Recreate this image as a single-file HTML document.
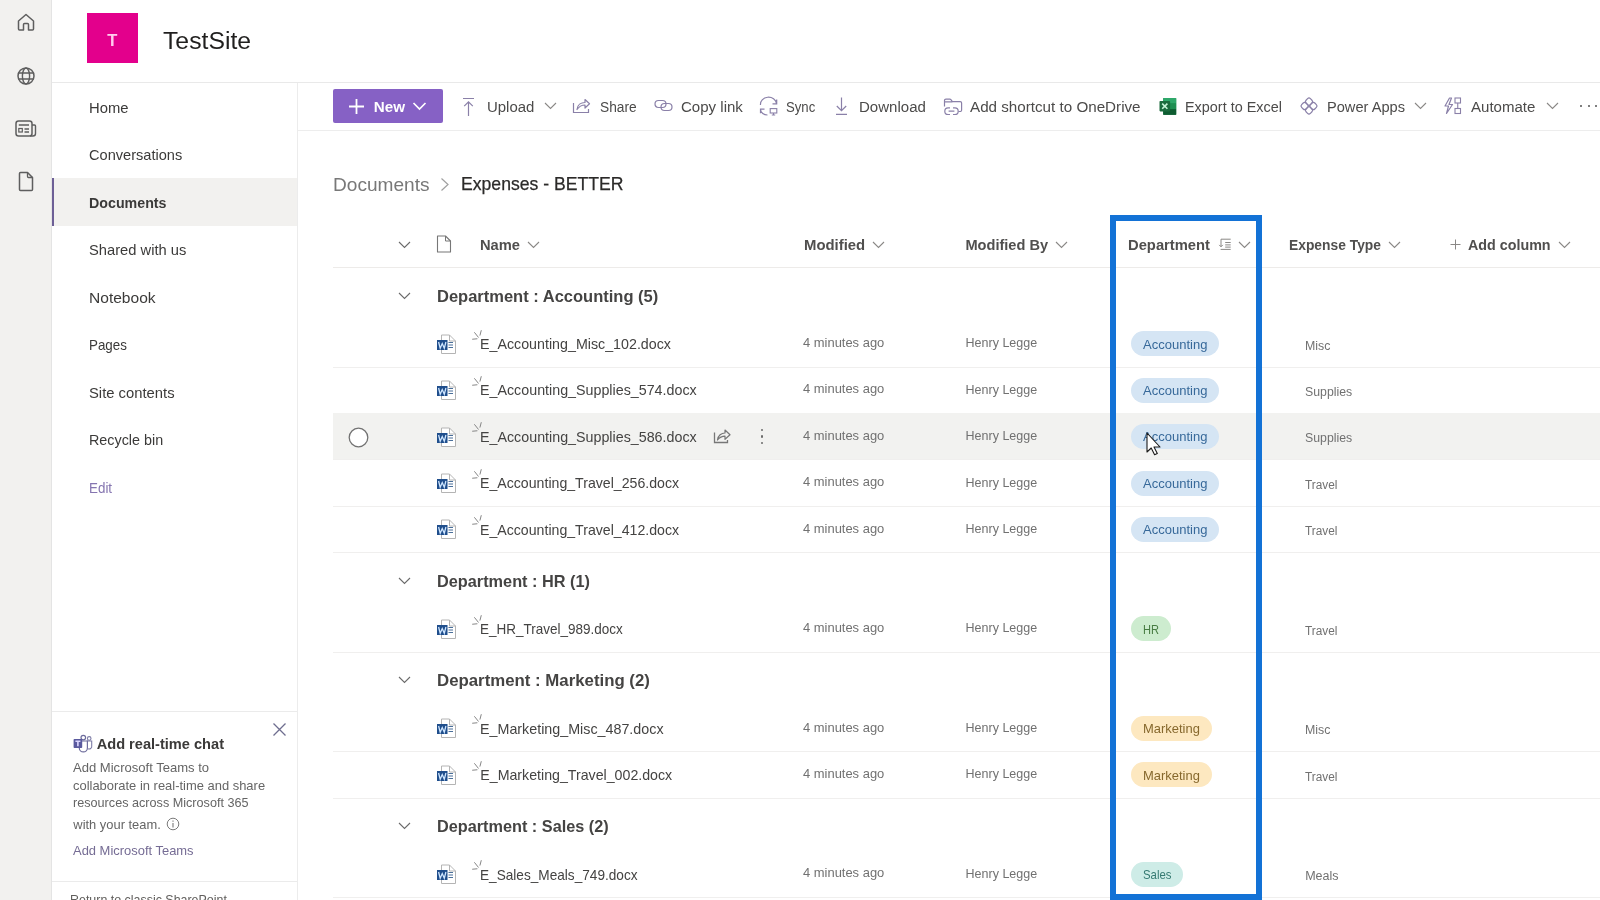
<!DOCTYPE html>
<html><head><meta charset="utf-8"><style>
html,body{margin:0;padding:0;width:1600px;height:900px;overflow:hidden;background:#fff;}
body{position:relative;font-family:"Liberation Sans", sans-serif;}
.t{position:absolute;white-space:nowrap;transform-origin:0 0;}
.r{position:absolute;}
</style></head><body><div id="w" style="position:absolute;left:0;top:0;width:1600px;height:900px;overflow:hidden;filter:blur(0.4px);">
<div class="r" style="left:0px;top:0px;width:51px;height:900px;background:#f2f1ef;"></div>
<div class="r" style="left:51px;top:0px;width:1px;height:900px;background:#e4e4e4;"></div>
<div class="r" style="left:52px;top:82px;width:1548px;height:1px;background:#e9e9e9;"></div>
<div class="r" style="left:297px;top:83px;width:1px;height:817px;background:#ececec;"></div>
<div class="r" style="left:298px;top:130px;width:1302px;height:1px;background:#ededed;"></div>
<svg class="r" style="left:16px;top:12px;" width="20" height="20" viewBox="0 0 20 20" fill="none"><path d="M2.5 9 L10 2.5 L17.5 9 V17 A1 1 0 0 1 16.5 18 H12.5 V12.5 A1 1 0 0 0 11.5 11.5 H8.5 A1 1 0 0 0 7.5 12.5 V18 H3.5 A1 1 0 0 1 2.5 17 Z" stroke="#5e5e5e" stroke-width="1.5" stroke-linejoin="round"/></svg>
<svg class="r" style="left:16px;top:66px;" width="20" height="20" viewBox="0 0 20 20" fill="none"><circle cx="10" cy="10" r="8" stroke="#5e5e5e" stroke-width="1.5"/><ellipse cx="10" cy="10" rx="3.6" ry="8" stroke="#5e5e5e" stroke-width="1.4"/><path d="M2.3 7H17.7M2.3 13H17.7" stroke="#5e5e5e" stroke-width="1.4"/></svg>
<svg class="r" style="left:15px;top:119px;" width="22" height="19" viewBox="0 0 22 19" fill="none"><rect x="1" y="2" width="16" height="15" rx="2.5" stroke="#5e5e5e" stroke-width="1.5"/><path d="M17 6H19.5A1 1 0 0 1 20.5 7V14.5A2.5 2.5 0 0 1 18 17H15" stroke="#5e5e5e" stroke-width="1.4"/><rect x="3.8" y="9.5" width="3.5" height="3.5" stroke="#5e5e5e" stroke-width="1.2"/><path d="M3.8 6H14M9.5 10H14M9.5 13H14" stroke="#5e5e5e" stroke-width="1.3"/></svg>
<svg class="r" style="left:17px;top:171px;" width="18" height="21" viewBox="0 0 18 21" fill="none"><path d="M2.5 2.5A1 1 0 0 1 3.5 1.5H10.5L15.5 6.5V18.5A1 1 0 0 1 14.5 19.5H3.5A1 1 0 0 1 2.5 18.5Z" stroke="#5e5e5e" stroke-width="1.5" stroke-linejoin="round"/><path d="M10.5 1.5V5.5A1 1 0 0 0 11.5 6.5H15.5" stroke="#5e5e5e" stroke-width="1.3"/></svg>
<div class="r" style="left:87px;top:13px;width:51px;height:50px;background:#e3008c;"></div>
<div class="t" style="left:107.20px;top:32.03px;font-size:16.5px;line-height:16.5px;color:#ffcdee;font-weight:700;">T</div>
<div class="t" style="left:163.00px;top:28.65px;font-size:24.4px;line-height:24.4px;color:#201f1e;transform:scaleX(1.0145);">TestSite</div>
<div class="r" style="left:52px;top:178px;width:245px;height:48px;background:#f2f1ef;"></div>
<div class="r" style="left:52px;top:178px;width:2px;height:48px;background:#6d5f96;"></div>
<div class="t" style="left:89.00px;top:100.97px;font-size:14.8px;line-height:14.8px;color:#3b3a39;">Home</div>
<div class="t" style="left:89.00px;top:148.47px;font-size:14.8px;line-height:14.8px;color:#3b3a39;transform:scaleX(0.9860);">Conversations</div>
<div class="t" style="left:89.00px;top:196.20px;font-size:14.3px;line-height:14.3px;color:#3b3a39;font-weight:700;transform:scaleX(0.9953);">Documents</div>
<div class="t" style="left:89.00px;top:243.27px;font-size:14.8px;line-height:14.8px;color:#3b3a39;transform:scaleX(0.9939);">Shared with us</div>
<div class="t" style="left:89.00px;top:290.67px;font-size:14.8px;line-height:14.8px;color:#3b3a39;transform:scaleX(1.0518);">Notebook</div>
<div class="t" style="left:89.00px;top:337.77px;font-size:14.8px;line-height:14.8px;color:#3b3a39;transform:scaleX(0.9033);">Pages</div>
<div class="t" style="left:89.00px;top:385.67px;font-size:14.8px;line-height:14.8px;color:#3b3a39;">Site contents</div>
<div class="t" style="left:89.00px;top:432.87px;font-size:14.8px;line-height:14.8px;color:#3b3a39;transform:scaleX(0.9697);">Recycle bin</div>
<div class="t" style="left:89.00px;top:480.57px;font-size:14.8px;line-height:14.8px;color:#8575b0;transform:scaleX(0.9048);">Edit</div>
<div class="r" style="left:52px;top:711px;width:245px;height:1px;background:#ebebeb;"></div>
<div class="r" style="left:52px;top:881px;width:245px;height:1px;background:#ebebeb;"></div>
<svg class="r" style="left:272px;top:722px;" width="15" height="15" viewBox="0 0 15 15" fill="none"><path d="M1.5 1.5L13.5 13.5M13.5 1.5L1.5 13.5" stroke="#6e6d8f" stroke-width="1.3"/></svg>
<svg class="r" style="left:71px;top:732px;" width="23" height="22" viewBox="0 0 23 22" fill="none"><circle cx="12.3" cy="5.6" r="2.3" stroke="#6d6c9c" stroke-width="1.2"/><circle cx="18.2" cy="6.4" r="1.8" stroke="#7d7ca6" stroke-width="1.1"/><path d="M15.8 9H20.7V13.8A2.6 2.6 0 0 1 16.8 16.6" stroke="#7d7ca6" stroke-width="1.1"/><path d="M8.3 9H16.4V15.9A4.05 4.05 0 0 1 8.3 15.9Z" fill="#fff" stroke="#6d6c9c" stroke-width="1.2"/><rect x="2.6" y="7" width="8.6" height="9" rx="0.8" fill="#5a5a9e"/><path d="M4.4 9.2H9.4M6.9 9.2V14.2" stroke="#dcd6ff" stroke-width="1.6"/></svg>
<div class="t" style="left:96.70px;top:736.94px;font-size:14.6px;line-height:14.6px;color:#3b3a39;font-weight:700;">Add real-time chat</div>
<div class="t" style="left:73.30px;top:762.28px;font-size:12.9px;line-height:12.9px;color:#656565;transform:scaleX(1.0123);">Add Microsoft Teams to</div>
<div class="t" style="left:73.30px;top:779.58px;font-size:12.9px;line-height:12.9px;color:#656565;transform:scaleX(1.0040);">collaborate in real-time and share</div>
<div class="t" style="left:73.30px;top:796.98px;font-size:12.9px;line-height:12.9px;color:#656565;transform:scaleX(0.9802);">resources across Microsoft 365</div>
<div class="t" style="left:73.36px;top:819.08px;font-size:12.9px;line-height:12.9px;color:#656565;">with your team.</div>
<svg class="r" style="left:166px;top:817px;" width="14" height="14" viewBox="0 0 14 14" fill="none"><circle cx="7" cy="7" r="5.8" stroke="#7a7a7a" stroke-width="1"/><path d="M7 6V10.5M7 3.6V4.8" stroke="#7a7a7a" stroke-width="1.1"/></svg>
<div class="t" style="left:73.30px;top:845.38px;font-size:12.9px;line-height:12.9px;color:#756c94;transform:scaleX(1.0039);">Add Microsoft Teams</div>
<div class="t" style="left:69.50px;top:894.08px;font-size:12.9px;line-height:12.9px;color:#605e5c;transform:scaleX(0.9644);">Return to classic SharePoint</div>
<div class="r" style="left:333px;top:89px;width:110px;height:34px;background:#8661c5;border-radius:2px;"></div>
<svg class="r" style="left:348px;top:98px;" width="17" height="17" viewBox="0 0 17 17" fill="none"><path d="M8.5 1V16M1 8.5H16" stroke="#fff" stroke-width="1.8"/></svg>
<div class="t" style="left:373.75px;top:99.13px;font-size:15.2px;line-height:15.2px;color:#ffffff;font-weight:700;">New</div>
<svg class="r" style="left:412px;top:101px;" width="15" height="10" viewBox="0 0 15 10" fill="none"><path d="M1.5 2L7.5 8L13.5 2" stroke="#fff" stroke-width="1.7"/></svg>
<svg class="r" style="left:462px;top:97px;" width="13" height="20" viewBox="0 0 13 20" fill="none"><path d="M1 1.5H12M6.5 4.5V19M2.2 9.2L6.5 4.9L10.8 9.2" stroke="#8a80a8" stroke-width="1.2"/></svg>
<div class="t" style="left:487.00px;top:100.09px;font-size:14.9px;line-height:14.9px;color:#4c4b4a;transform:scaleX(1.0035);">Upload</div>
<svg class="r" style="left:544px;top:102px;" width="13" height="8" viewBox="0 0 13 8" fill="none"><path d="M1 1L6.5 6.5L12 1" stroke="#8a8886" stroke-width="1.1"/></svg>
<svg class="r" style="left:572px;top:97px;" width="19" height="17" viewBox="0 0 19 17" fill="none"><path d="M1.5 6V15.5H16.5V12" stroke="#8a80a8" stroke-width="1.2"/><path d="M5 12.5C5.5 8 9 5.5 13 5.5V2.5L17.5 6.8L13 11V8C10 8 7 9.5 5 12.5Z" stroke="#8a80a8" stroke-width="1.2" stroke-linejoin="round"/></svg>
<div class="t" style="left:600.00px;top:100.09px;font-size:14.9px;line-height:14.9px;color:#4c4b4a;transform:scaleX(0.9225);">Share</div>
<svg class="r" style="left:654px;top:99px;" width="19" height="13" viewBox="0 0 19 13" fill="none"><rect x="1" y="1.5" width="11" height="7" rx="3.5" stroke="#8a80a8" stroke-width="1.2"/><rect x="7" y="4.5" width="11" height="7" rx="3.5" stroke="#8a80a8" stroke-width="1.2"/></svg>
<div class="t" style="left:680.70px;top:100.09px;font-size:14.9px;line-height:14.9px;color:#4c4b4a;transform:scaleX(1.0100);">Copy link</div>
<svg class="r" style="left:759px;top:96px;" width="20" height="21" viewBox="0 0 20 21" fill="none"><path d="M1.5 9A8 7 0 0 1 17.5 7.5M17.7 3.5V7.8H13.5" stroke="#8a80a8" stroke-width="1.2"/><path d="M1.5 13.5A7 6 0 0 0 8.5 19M1.5 17.2V13.2H5.5" stroke="#8a80a8" stroke-width="1.2"/><rect x="11.2" y="12.6" width="6.6" height="4.4" stroke="#8a80a8" stroke-width="1.1"/><path d="M14.5 17V19M12.8 19H16.2" stroke="#8a80a8" stroke-width="1.1"/></svg>
<div class="t" style="left:786.00px;top:100.09px;font-size:14.9px;line-height:14.9px;color:#4c4b4a;transform:scaleX(0.8838);">Sync</div>
<svg class="r" style="left:835px;top:96px;" width="13" height="20" viewBox="0 0 13 20" fill="none"><path d="M6.5 1.5V14.5M1.8 10L6.5 14.7L11.2 10M1 18.3H12" stroke="#8a80a8" stroke-width="1.2"/></svg>
<div class="t" style="left:859.40px;top:100.09px;font-size:14.9px;line-height:14.9px;color:#4c4b4a;transform:scaleX(1.0094);">Download</div>
<svg class="r" style="left:943px;top:97px;" width="20" height="20" viewBox="0 0 20 20" fill="none"><path d="M1.5 9.5V3.5A1.4 1.4 0 0 1 2.9 2.1H6.8A1.4 1.4 0 0 1 7.9 2.6L9.4 4.6H17.2A1.4 1.4 0 0 1 18.6 6V13.1A1.4 1.4 0 0 1 17.2 14.5H15.5M1.5 4.8H9.4" stroke="#8a80a8" stroke-width="1.2"/><path d="M7 10.9H5.1A3.3 3.3 0 0 0 5.1 17.5H7M10 10.9H11.9A3.3 3.3 0 0 1 11.9 17.5H10M5.6 14.2H11.4" stroke="#8a80a8" stroke-width="1.2"/></svg>
<div class="t" style="left:970.30px;top:100.09px;font-size:14.9px;line-height:14.9px;color:#4c4b4a;transform:scaleX(1.0202);">Add shortcut to OneDrive</div>
<svg class="r" style="left:1159px;top:97px;" width="18" height="18" viewBox="0 0 18 18" fill="none"><rect x="4.2" y="1" width="13" height="16.8" rx="0.8" fill="#107c41"/><rect x="4.2" y="1" width="13" height="5.6" fill="#2fa86a"/><rect x="10" y="6.6" width="7.2" height="5.6" fill="#1f8f52"/><rect x="4.2" y="12.2" width="13" height="5.6" fill="#0e5c31"/><rect x="0.5" y="4" width="10.6" height="10.4" rx="0.8" fill="#1b6a3d"/><path d="M3.2 6.6L8.4 11.8M8.4 6.6L3.2 11.8" stroke="#c6f2d6" stroke-width="1.6"/></svg>
<div class="t" style="left:1185.40px;top:100.09px;font-size:14.9px;line-height:14.9px;color:#4c4b4a;transform:scaleX(0.9680);">Export to Excel</div>
<svg class="r" style="left:1299px;top:96px;" width="20" height="20" viewBox="0 0 20 20" fill="none"><g transform="rotate(45 10 10)" stroke="#8a80a8" stroke-width="1.2"><rect x="3.8" y="3.8" width="6.2" height="6.2" rx="2"/><rect x="10" y="3.8" width="6.2" height="6.2" rx="2"/><rect x="3.8" y="10" width="6.2" height="6.2" rx="2"/><rect x="10" y="10" width="6.2" height="6.2" rx="2"/></g></svg>
<div class="t" style="left:1327.00px;top:100.09px;font-size:14.9px;line-height:14.9px;color:#4c4b4a;transform:scaleX(0.9812);">Power Apps</div>
<svg class="r" style="left:1414px;top:102px;" width="13" height="8" viewBox="0 0 13 8" fill="none"><path d="M1 1L6.5 6.5L12 1" stroke="#8a8886" stroke-width="1.1"/></svg>
<svg class="r" style="left:1443px;top:97px;" width="19" height="18" viewBox="0 0 19 18" fill="none"><path d="M6.5 1L2 9H5.5L3.5 16.5L9.5 7.5H6L8.5 1Z" stroke="#8a80a8" stroke-width="1.2" stroke-linejoin="round"/><rect x="12" y="1" width="5.5" height="5" stroke="#8a80a8" stroke-width="1.1"/><rect x="12" y="11.5" width="5.5" height="5" stroke="#8a80a8" stroke-width="1.1"/><path d="M14.75 6V11.5" stroke="#8a80a8" stroke-width="1.1"/></svg>
<div class="t" style="left:1470.60px;top:100.09px;font-size:14.9px;line-height:14.9px;color:#4c4b4a;transform:scaleX(1.0098);">Automate</div>
<svg class="r" style="left:1546px;top:102px;" width="13" height="8" viewBox="0 0 13 8" fill="none"><path d="M1 1L6.5 6.5L12 1" stroke="#8a8886" stroke-width="1.1"/></svg>
<div class="r" style="left:1580px;top:105px;width:2px;height:2px;background:#555;border-radius:1px;"></div>
<div class="r" style="left:1587.5px;top:105px;width:2px;height:2px;background:#555;border-radius:1px;"></div>
<div class="r" style="left:1595px;top:105px;width:2px;height:2px;background:#555;border-radius:1px;"></div>
<div class="t" style="left:332.80px;top:174.72px;font-size:19px;line-height:19px;color:#787878;transform:scaleX(1.0048);">Documents</div>
<svg class="r" style="left:440px;top:177px;" width="10" height="15" viewBox="0 0 10 15" fill="none"><path d="M1.5 1.5L8 7.5L1.5 13.5" stroke="#a0a0a0" stroke-width="1.2"/></svg>
<div class="t" style="left:461.00px;top:174.86px;font-size:18.6px;line-height:18.6px;color:#2b2a29;transform:scaleX(0.9471);-webkit-text-stroke:0.25px #2b2a29;">Expenses - BETTER</div>
<div class="r" style="left:333px;top:267px;width:1267px;height:1px;background:#edebe9;"></div>
<svg class="r" style="left:397.5px;top:241px;" width="13" height="8" viewBox="0 0 13 8" fill="none"><path d="M1 1L6.5 6.5L12 1" stroke="#6a6a6a" stroke-width="1.1"/></svg>
<svg class="r" style="left:436px;top:235px;" width="16" height="18" viewBox="0 0 16 18" fill="none"><path d="M1.5 1H9.5L14.5 6V17H1.5Z" stroke="#777" stroke-width="1.1" stroke-linejoin="round"/><path d="M9.5 1V6H14.5" stroke="#777" stroke-width="1"/></svg>
<div class="t" style="left:480.00px;top:237.64px;font-size:14.6px;line-height:14.6px;color:#504f4e;font-weight:700;transform:scaleX(1.0054);">Name</div>
<svg class="r" style="left:527px;top:241px;" width="13" height="8" viewBox="0 0 13 8" fill="none"><path d="M1 1L6.5 6.5L12 1" stroke="#8a8886" stroke-width="1.1"/></svg>
<div class="t" style="left:803.50px;top:237.64px;font-size:14.6px;line-height:14.6px;color:#504f4e;font-weight:700;transform:scaleX(1.0199);">Modified</div>
<svg class="r" style="left:872px;top:241px;" width="13" height="8" viewBox="0 0 13 8" fill="none"><path d="M1 1L6.5 6.5L12 1" stroke="#8a8886" stroke-width="1.1"/></svg>
<div class="t" style="left:965.40px;top:237.64px;font-size:14.6px;line-height:14.6px;color:#504f4e;font-weight:700;">Modified By</div>
<svg class="r" style="left:1055px;top:241px;" width="13" height="8" viewBox="0 0 13 8" fill="none"><path d="M1 1L6.5 6.5L12 1" stroke="#8a8886" stroke-width="1.1"/></svg>
<div class="t" style="left:1127.60px;top:237.64px;font-size:14.6px;line-height:14.6px;color:#504f4e;font-weight:700;transform:scaleX(1.0111);">Department</div>
<svg class="r" style="left:1218px;top:237px;" width="14" height="14" viewBox="0 0 14 14" fill="none"><path d="M3 2.2H12.7M3 2.2V9.6M1.2 7.9L3 9.8L4.8 7.9M7.2 5.5H12.7M7.2 7.9H12.7M7.2 10.1H12.7M2.6 12.4H12.7" stroke="#8a8886" stroke-width="1"/></svg>
<svg class="r" style="left:1238px;top:241px;" width="13" height="8" viewBox="0 0 13 8" fill="none"><path d="M1 1L6.5 6.5L12 1" stroke="#8a8886" stroke-width="1.1"/></svg>
<div class="t" style="left:1289.40px;top:237.64px;font-size:14.6px;line-height:14.6px;color:#504f4e;font-weight:700;transform:scaleX(0.9476);">Expense Type</div>
<svg class="r" style="left:1388px;top:241px;" width="13" height="8" viewBox="0 0 13 8" fill="none"><path d="M1 1L6.5 6.5L12 1" stroke="#8a8886" stroke-width="1.1"/></svg>
<svg class="r" style="left:1450px;top:239px;" width="11" height="11" viewBox="0 0 11 11" fill="none"><path d="M5.5 0.5V10.5M0.5 5.5H10.5" stroke="#8a8886" stroke-width="1"/></svg>
<div class="t" style="left:1467.60px;top:237.64px;font-size:14.6px;line-height:14.6px;color:#504f4e;font-weight:700;transform:scaleX(0.9797);">Add column</div>
<svg class="r" style="left:1558px;top:241px;" width="13" height="8" viewBox="0 0 13 8" fill="none"><path d="M1 1L6.5 6.5L12 1" stroke="#8a8886" stroke-width="1.1"/></svg>
<svg class="r" style="left:397.5px;top:291.55px;" width="13" height="8" viewBox="0 0 13 8" fill="none"><path d="M1 1L6.5 6.5L12 1" stroke="#6a6a6a" stroke-width="1.1"/></svg>
<div class="t" style="left:437.00px;top:287.68px;font-size:16.5px;line-height:16.5px;color:#454443;font-weight:700;">Department : Accounting (5)</div>
<svg class="r" style="left:436px;top:333.8px;" width="21" height="21" viewBox="0 0 21 21" fill="none"><path d="M5.5 1H13.5L19.5 7V19.5H5.5Z" fill="#fff" stroke="#b4b4b4" stroke-width="1"/><path d="M13.5 1V7H19.5" stroke="#b4b4b4" stroke-width="1"/><path d="M12.5 8.5H17M12.5 11H17M12.5 13.5H17" stroke="#4a6f9a" stroke-width="1"/><rect x="1" y="6" width="10.5" height="10" fill="#1f4e8c"/><path d="M2.6 8L4.2 14.3L6.25 9.6L8.3 14.3L9.9 8" stroke="#cfe6ff" stroke-width="1.3" fill="none"/></svg>
<svg class="r" style="left:471.5px;top:329.6px;" width="11" height="11" viewBox="0 0 11 11" fill="none"><path d="M0.6 9.2L5 8.8M2.6 2.6L6.3 7.2M9.2 0.6L8 5.2" stroke="#858585" stroke-width="1" stroke-linecap="round"/></svg>
<div class="t" style="left:480.30px;top:337.03px;font-size:14.2px;line-height:14.2px;color:#444342;transform:scaleX(1.0047);">E_Accounting_Misc_102.docx</div>
<div class="t" style="left:803.00px;top:336.98px;font-size:12.9px;line-height:12.9px;color:#717171;transform:scaleX(1.0036);">4 minutes ago</div>
<div class="t" style="left:965.60px;top:337.32px;font-size:12.5px;line-height:12.5px;color:#717171;">Henry Legge</div>
<div class="r" style="left:1131px;top:331.3px;width:88px;height:25px;background:#d5e5f4;border-radius:13px;"></div>
<div class="t" style="left:1143.20px;top:338.68px;font-size:12.9px;line-height:12.9px;color:#37699a;transform:scaleX(1.0101);">Accounting</div>
<div class="t" style="left:1305.20px;top:339.62px;font-size:12.5px;line-height:12.5px;color:#717171;transform:scaleX(0.9888);">Misc</div>
<div class="r" style="left:333px;top:366.5px;width:1267px;height:1px;background:#f0efee;"></div>
<svg class="r" style="left:436px;top:380.2px;" width="21" height="21" viewBox="0 0 21 21" fill="none"><path d="M5.5 1H13.5L19.5 7V19.5H5.5Z" fill="#fff" stroke="#b4b4b4" stroke-width="1"/><path d="M13.5 1V7H19.5" stroke="#b4b4b4" stroke-width="1"/><path d="M12.5 8.5H17M12.5 11H17M12.5 13.5H17" stroke="#4a6f9a" stroke-width="1"/><rect x="1" y="6" width="10.5" height="10" fill="#1f4e8c"/><path d="M2.6 8L4.2 14.3L6.25 9.6L8.3 14.3L9.9 8" stroke="#cfe6ff" stroke-width="1.3" fill="none"/></svg>
<svg class="r" style="left:471.5px;top:376.0px;" width="11" height="11" viewBox="0 0 11 11" fill="none"><path d="M0.6 9.2L5 8.8M2.6 2.6L6.3 7.2M9.2 0.6L8 5.2" stroke="#858585" stroke-width="1" stroke-linecap="round"/></svg>
<div class="t" style="left:480.30px;top:383.43px;font-size:14.2px;line-height:14.2px;color:#444342;transform:scaleX(1.0062);">E_Accounting_Supplies_574.docx</div>
<div class="t" style="left:803.00px;top:383.38px;font-size:12.9px;line-height:12.9px;color:#717171;transform:scaleX(1.0036);">4 minutes ago</div>
<div class="t" style="left:965.60px;top:383.72px;font-size:12.5px;line-height:12.5px;color:#717171;">Henry Legge</div>
<div class="r" style="left:1131px;top:377.7px;width:88px;height:25px;background:#d5e5f4;border-radius:13px;"></div>
<div class="t" style="left:1143.20px;top:385.08px;font-size:12.9px;line-height:12.9px;color:#37699a;transform:scaleX(1.0101);">Accounting</div>
<div class="t" style="left:1305.20px;top:386.02px;font-size:12.5px;line-height:12.5px;color:#717171;transform:scaleX(0.9846);">Supplies</div>
<div class="r" style="left:333px;top:412.9px;width:1267px;height:1px;background:#f0efee;"></div>
<div class="r" style="left:333px;top:413.4px;width:1267px;height:46.4px;background:#f2f2f0;"></div>
<svg class="r" style="left:347px;top:425.59999999999997px;" width="23" height="23" viewBox="0 0 23 23" fill="none"><circle cx="11.5" cy="11.5" r="9.3" fill="#fff" stroke="#727272" stroke-width="1.3"/></svg>
<svg class="r" style="left:713px;top:427.59999999999997px;" width="19" height="16" viewBox="0 0 19 16" fill="none"><path d="M1.5 4.5V14.5H14.5V12" stroke="#777" stroke-width="1.3"/><path d="M4.5 12C5 7.5 8.5 5 12 5V2L17 6.8L12 11.3V8.2C9 8.2 6.5 9.5 4.5 12Z" stroke="#777" stroke-width="1.2" stroke-linejoin="round"/></svg>
<div class="r" style="left:760.8px;top:428.9px;width:2.5px;height:2.5px;background:#6b6b6b;border-radius:50%;"></div>
<div class="r" style="left:760.8px;top:435.4px;width:2.5px;height:2.5px;background:#6b6b6b;border-radius:50%;"></div>
<div class="r" style="left:760.8px;top:441.9px;width:2.5px;height:2.5px;background:#6b6b6b;border-radius:50%;"></div>
<svg class="r" style="left:436px;top:426.59999999999997px;" width="21" height="21" viewBox="0 0 21 21" fill="none"><path d="M5.5 1H13.5L19.5 7V19.5H5.5Z" fill="#fff" stroke="#b4b4b4" stroke-width="1"/><path d="M13.5 1V7H19.5" stroke="#b4b4b4" stroke-width="1"/><path d="M12.5 8.5H17M12.5 11H17M12.5 13.5H17" stroke="#4a6f9a" stroke-width="1"/><rect x="1" y="6" width="10.5" height="10" fill="#1f4e8c"/><path d="M2.6 8L4.2 14.3L6.25 9.6L8.3 14.3L9.9 8" stroke="#cfe6ff" stroke-width="1.3" fill="none"/></svg>
<svg class="r" style="left:471.5px;top:422.4px;" width="11" height="11" viewBox="0 0 11 11" fill="none"><path d="M0.6 9.2L5 8.8M2.6 2.6L6.3 7.2M9.2 0.6L8 5.2" stroke="#858585" stroke-width="1" stroke-linecap="round"/></svg>
<div class="t" style="left:480.30px;top:429.83px;font-size:14.2px;line-height:14.2px;color:#444342;transform:scaleX(1.0062);">E_Accounting_Supplies_586.docx</div>
<div class="t" style="left:803.00px;top:429.78px;font-size:12.9px;line-height:12.9px;color:#717171;transform:scaleX(1.0036);">4 minutes ago</div>
<div class="t" style="left:965.60px;top:430.12px;font-size:12.5px;line-height:12.5px;color:#717171;">Henry Legge</div>
<div class="r" style="left:1131px;top:424.09999999999997px;width:88px;height:25px;background:#d5e5f4;border-radius:13px;"></div>
<div class="t" style="left:1143.20px;top:431.48px;font-size:12.9px;line-height:12.9px;color:#37699a;transform:scaleX(1.0101);">Accounting</div>
<div class="t" style="left:1305.20px;top:432.42px;font-size:12.5px;line-height:12.5px;color:#717171;transform:scaleX(0.9846);">Supplies</div>
<div class="r" style="left:333px;top:459.29999999999995px;width:1267px;height:1px;background:#f0efee;"></div>
<svg class="r" style="left:436px;top:472.99999999999994px;" width="21" height="21" viewBox="0 0 21 21" fill="none"><path d="M5.5 1H13.5L19.5 7V19.5H5.5Z" fill="#fff" stroke="#b4b4b4" stroke-width="1"/><path d="M13.5 1V7H19.5" stroke="#b4b4b4" stroke-width="1"/><path d="M12.5 8.5H17M12.5 11H17M12.5 13.5H17" stroke="#4a6f9a" stroke-width="1"/><rect x="1" y="6" width="10.5" height="10" fill="#1f4e8c"/><path d="M2.6 8L4.2 14.3L6.25 9.6L8.3 14.3L9.9 8" stroke="#cfe6ff" stroke-width="1.3" fill="none"/></svg>
<svg class="r" style="left:471.5px;top:468.79999999999995px;" width="11" height="11" viewBox="0 0 11 11" fill="none"><path d="M0.6 9.2L5 8.8M2.6 2.6L6.3 7.2M9.2 0.6L8 5.2" stroke="#858585" stroke-width="1" stroke-linecap="round"/></svg>
<div class="t" style="left:480.30px;top:476.23px;font-size:14.2px;line-height:14.2px;color:#444342;transform:scaleX(0.9965);">E_Accounting_Travel_256.docx</div>
<div class="t" style="left:803.00px;top:476.18px;font-size:12.9px;line-height:12.9px;color:#717171;transform:scaleX(1.0036);">4 minutes ago</div>
<div class="t" style="left:965.60px;top:476.52px;font-size:12.5px;line-height:12.5px;color:#717171;">Henry Legge</div>
<div class="r" style="left:1131px;top:470.49999999999994px;width:88px;height:25px;background:#d5e5f4;border-radius:13px;"></div>
<div class="t" style="left:1143.20px;top:477.88px;font-size:12.9px;line-height:12.9px;color:#37699a;transform:scaleX(1.0101);">Accounting</div>
<div class="t" style="left:1305.20px;top:478.82px;font-size:12.5px;line-height:12.5px;color:#717171;transform:scaleX(0.9460);">Travel</div>
<div class="r" style="left:333px;top:505.69999999999993px;width:1267px;height:1px;background:#f0efee;"></div>
<svg class="r" style="left:436px;top:519.4px;" width="21" height="21" viewBox="0 0 21 21" fill="none"><path d="M5.5 1H13.5L19.5 7V19.5H5.5Z" fill="#fff" stroke="#b4b4b4" stroke-width="1"/><path d="M13.5 1V7H19.5" stroke="#b4b4b4" stroke-width="1"/><path d="M12.5 8.5H17M12.5 11H17M12.5 13.5H17" stroke="#4a6f9a" stroke-width="1"/><rect x="1" y="6" width="10.5" height="10" fill="#1f4e8c"/><path d="M2.6 8L4.2 14.3L6.25 9.6L8.3 14.3L9.9 8" stroke="#cfe6ff" stroke-width="1.3" fill="none"/></svg>
<svg class="r" style="left:471.5px;top:515.1999999999999px;" width="11" height="11" viewBox="0 0 11 11" fill="none"><path d="M0.6 9.2L5 8.8M2.6 2.6L6.3 7.2M9.2 0.6L8 5.2" stroke="#858585" stroke-width="1" stroke-linecap="round"/></svg>
<div class="t" style="left:480.30px;top:522.63px;font-size:14.2px;line-height:14.2px;color:#444342;transform:scaleX(0.9965);">E_Accounting_Travel_412.docx</div>
<div class="t" style="left:803.00px;top:522.58px;font-size:12.9px;line-height:12.9px;color:#717171;transform:scaleX(1.0036);">4 minutes ago</div>
<div class="t" style="left:965.60px;top:522.92px;font-size:12.5px;line-height:12.5px;color:#717171;">Henry Legge</div>
<div class="r" style="left:1131px;top:516.9px;width:88px;height:25px;background:#d5e5f4;border-radius:13px;"></div>
<div class="t" style="left:1143.20px;top:524.28px;font-size:12.9px;line-height:12.9px;color:#37699a;transform:scaleX(1.0101);">Accounting</div>
<div class="t" style="left:1305.20px;top:525.22px;font-size:12.5px;line-height:12.5px;color:#717171;transform:scaleX(0.9460);">Travel</div>
<div class="r" style="left:333px;top:552.0999999999999px;width:1267px;height:1px;background:#f0efee;"></div>
<svg class="r" style="left:397.5px;top:576.6499999999999px;" width="13" height="8" viewBox="0 0 13 8" fill="none"><path d="M1 1L6.5 6.5L12 1" stroke="#6a6a6a" stroke-width="1.1"/></svg>
<div class="t" style="left:437.00px;top:572.78px;font-size:16.5px;line-height:16.5px;color:#454443;font-weight:700;transform:scaleX(0.9875);">Department : HR (1)</div>
<svg class="r" style="left:436px;top:618.9px;" width="21" height="21" viewBox="0 0 21 21" fill="none"><path d="M5.5 1H13.5L19.5 7V19.5H5.5Z" fill="#fff" stroke="#b4b4b4" stroke-width="1"/><path d="M13.5 1V7H19.5" stroke="#b4b4b4" stroke-width="1"/><path d="M12.5 8.5H17M12.5 11H17M12.5 13.5H17" stroke="#4a6f9a" stroke-width="1"/><rect x="1" y="6" width="10.5" height="10" fill="#1f4e8c"/><path d="M2.6 8L4.2 14.3L6.25 9.6L8.3 14.3L9.9 8" stroke="#cfe6ff" stroke-width="1.3" fill="none"/></svg>
<svg class="r" style="left:471.5px;top:614.6999999999999px;" width="11" height="11" viewBox="0 0 11 11" fill="none"><path d="M0.6 9.2L5 8.8M2.6 2.6L6.3 7.2M9.2 0.6L8 5.2" stroke="#858585" stroke-width="1" stroke-linecap="round"/></svg>
<div class="t" style="left:480.30px;top:622.13px;font-size:14.2px;line-height:14.2px;color:#444342;transform:scaleX(0.9512);">E_HR_Travel_989.docx</div>
<div class="t" style="left:803.00px;top:622.08px;font-size:12.9px;line-height:12.9px;color:#717171;transform:scaleX(1.0036);">4 minutes ago</div>
<div class="t" style="left:965.60px;top:622.42px;font-size:12.5px;line-height:12.5px;color:#717171;">Henry Legge</div>
<div class="r" style="left:1131px;top:616.4px;width:40px;height:25px;background:#cdeccf;border-radius:13px;"></div>
<div class="t" style="left:1143.20px;top:623.78px;font-size:12.9px;line-height:12.9px;color:#477c42;transform:scaleX(0.8583);">HR</div>
<div class="t" style="left:1305.20px;top:624.72px;font-size:12.5px;line-height:12.5px;color:#717171;transform:scaleX(0.9460);">Travel</div>
<div class="r" style="left:333px;top:651.5999999999999px;width:1267px;height:1px;background:#f0efee;"></div>
<svg class="r" style="left:397.5px;top:676.1499999999999px;" width="13" height="8" viewBox="0 0 13 8" fill="none"><path d="M1 1L6.5 6.5L12 1" stroke="#6a6a6a" stroke-width="1.1"/></svg>
<div class="t" style="left:437.00px;top:672.28px;font-size:16.5px;line-height:16.5px;color:#454443;font-weight:700;transform:scaleX(1.0184);">Department : Marketing (2)</div>
<svg class="r" style="left:436px;top:718.4px;" width="21" height="21" viewBox="0 0 21 21" fill="none"><path d="M5.5 1H13.5L19.5 7V19.5H5.5Z" fill="#fff" stroke="#b4b4b4" stroke-width="1"/><path d="M13.5 1V7H19.5" stroke="#b4b4b4" stroke-width="1"/><path d="M12.5 8.5H17M12.5 11H17M12.5 13.5H17" stroke="#4a6f9a" stroke-width="1"/><rect x="1" y="6" width="10.5" height="10" fill="#1f4e8c"/><path d="M2.6 8L4.2 14.3L6.25 9.6L8.3 14.3L9.9 8" stroke="#cfe6ff" stroke-width="1.3" fill="none"/></svg>
<svg class="r" style="left:471.5px;top:714.1999999999999px;" width="11" height="11" viewBox="0 0 11 11" fill="none"><path d="M0.6 9.2L5 8.8M2.6 2.6L6.3 7.2M9.2 0.6L8 5.2" stroke="#858585" stroke-width="1" stroke-linecap="round"/></svg>
<div class="t" style="left:480.30px;top:721.63px;font-size:14.2px;line-height:14.2px;color:#444342;transform:scaleX(1.0075);">E_Marketing_Misc_487.docx</div>
<div class="t" style="left:803.00px;top:721.58px;font-size:12.9px;line-height:12.9px;color:#717171;transform:scaleX(1.0036);">4 minutes ago</div>
<div class="t" style="left:965.60px;top:721.92px;font-size:12.5px;line-height:12.5px;color:#717171;">Henry Legge</div>
<div class="r" style="left:1131px;top:715.9px;width:81px;height:25px;background:#fde8c0;border-radius:13px;"></div>
<div class="t" style="left:1143.20px;top:723.28px;font-size:12.9px;line-height:12.9px;color:#86682d;transform:scaleX(1.0048);">Marketing</div>
<div class="t" style="left:1305.20px;top:724.22px;font-size:12.5px;line-height:12.5px;color:#717171;transform:scaleX(0.9888);">Misc</div>
<div class="r" style="left:333px;top:751.0999999999999px;width:1267px;height:1px;background:#f0efee;"></div>
<svg class="r" style="left:436px;top:764.8px;" width="21" height="21" viewBox="0 0 21 21" fill="none"><path d="M5.5 1H13.5L19.5 7V19.5H5.5Z" fill="#fff" stroke="#b4b4b4" stroke-width="1"/><path d="M13.5 1V7H19.5" stroke="#b4b4b4" stroke-width="1"/><path d="M12.5 8.5H17M12.5 11H17M12.5 13.5H17" stroke="#4a6f9a" stroke-width="1"/><rect x="1" y="6" width="10.5" height="10" fill="#1f4e8c"/><path d="M2.6 8L4.2 14.3L6.25 9.6L8.3 14.3L9.9 8" stroke="#cfe6ff" stroke-width="1.3" fill="none"/></svg>
<svg class="r" style="left:471.5px;top:760.5999999999999px;" width="11" height="11" viewBox="0 0 11 11" fill="none"><path d="M0.6 9.2L5 8.8M2.6 2.6L6.3 7.2M9.2 0.6L8 5.2" stroke="#858585" stroke-width="1" stroke-linecap="round"/></svg>
<div class="t" style="left:480.30px;top:768.03px;font-size:14.2px;line-height:14.2px;color:#444342;">E_Marketing_Travel_002.docx</div>
<div class="t" style="left:803.00px;top:767.98px;font-size:12.9px;line-height:12.9px;color:#717171;transform:scaleX(1.0036);">4 minutes ago</div>
<div class="t" style="left:965.60px;top:768.32px;font-size:12.5px;line-height:12.5px;color:#717171;">Henry Legge</div>
<div class="r" style="left:1131px;top:762.3px;width:81px;height:25px;background:#fde8c0;border-radius:13px;"></div>
<div class="t" style="left:1143.20px;top:769.68px;font-size:12.9px;line-height:12.9px;color:#86682d;transform:scaleX(1.0048);">Marketing</div>
<div class="t" style="left:1305.20px;top:770.62px;font-size:12.5px;line-height:12.5px;color:#717171;transform:scaleX(0.9460);">Travel</div>
<div class="r" style="left:333px;top:797.4999999999999px;width:1267px;height:1px;background:#f0efee;"></div>
<svg class="r" style="left:397.5px;top:822.0499999999998px;" width="13" height="8" viewBox="0 0 13 8" fill="none"><path d="M1 1L6.5 6.5L12 1" stroke="#6a6a6a" stroke-width="1.1"/></svg>
<div class="t" style="left:437.00px;top:818.18px;font-size:16.5px;line-height:16.5px;color:#454443;font-weight:700;transform:scaleX(0.9854);">Department : Sales (2)</div>
<svg class="r" style="left:436px;top:864.3px;" width="21" height="21" viewBox="0 0 21 21" fill="none"><path d="M5.5 1H13.5L19.5 7V19.5H5.5Z" fill="#fff" stroke="#b4b4b4" stroke-width="1"/><path d="M13.5 1V7H19.5" stroke="#b4b4b4" stroke-width="1"/><path d="M12.5 8.5H17M12.5 11H17M12.5 13.5H17" stroke="#4a6f9a" stroke-width="1"/><rect x="1" y="6" width="10.5" height="10" fill="#1f4e8c"/><path d="M2.6 8L4.2 14.3L6.25 9.6L8.3 14.3L9.9 8" stroke="#cfe6ff" stroke-width="1.3" fill="none"/></svg>
<svg class="r" style="left:471.5px;top:860.0999999999999px;" width="11" height="11" viewBox="0 0 11 11" fill="none"><path d="M0.6 9.2L5 8.8M2.6 2.6L6.3 7.2M9.2 0.6L8 5.2" stroke="#858585" stroke-width="1" stroke-linecap="round"/></svg>
<div class="t" style="left:480.30px;top:867.53px;font-size:14.2px;line-height:14.2px;color:#444342;transform:scaleX(0.9603);">E_Sales_Meals_749.docx</div>
<div class="t" style="left:803.00px;top:867.48px;font-size:12.9px;line-height:12.9px;color:#717171;transform:scaleX(1.0036);">4 minutes ago</div>
<div class="t" style="left:965.60px;top:867.82px;font-size:12.5px;line-height:12.5px;color:#717171;">Henry Legge</div>
<div class="r" style="left:1131px;top:861.8px;width:52px;height:25px;background:#ceece7;border-radius:13px;"></div>
<div class="t" style="left:1143.20px;top:869.18px;font-size:12.9px;line-height:12.9px;color:#367a72;transform:scaleX(0.8837);">Sales</div>
<div class="t" style="left:1305.20px;top:870.12px;font-size:12.5px;line-height:12.5px;color:#717171;">Meals</div>
<div class="r" style="left:333px;top:896.9999999999999px;width:1267px;height:1px;background:#f0efee;"></div>
<div class="r" style="left:1110px;top:215px;width:152px;height:685px;box-sizing:border-box;border:6.5px solid #1372d6;"></div>
<svg class="r" style="left:1146px;top:432px;" width="15" height="24" viewBox="0 0 15 24" fill="none"><path d="M1 1V20L5.2 16L8.6 22.8L11.3 21.6L8 15H14Z" fill="#fff" stroke="#1a1a1a" stroke-width="1.1" stroke-linejoin="round"/></svg>
</div></body></html>
